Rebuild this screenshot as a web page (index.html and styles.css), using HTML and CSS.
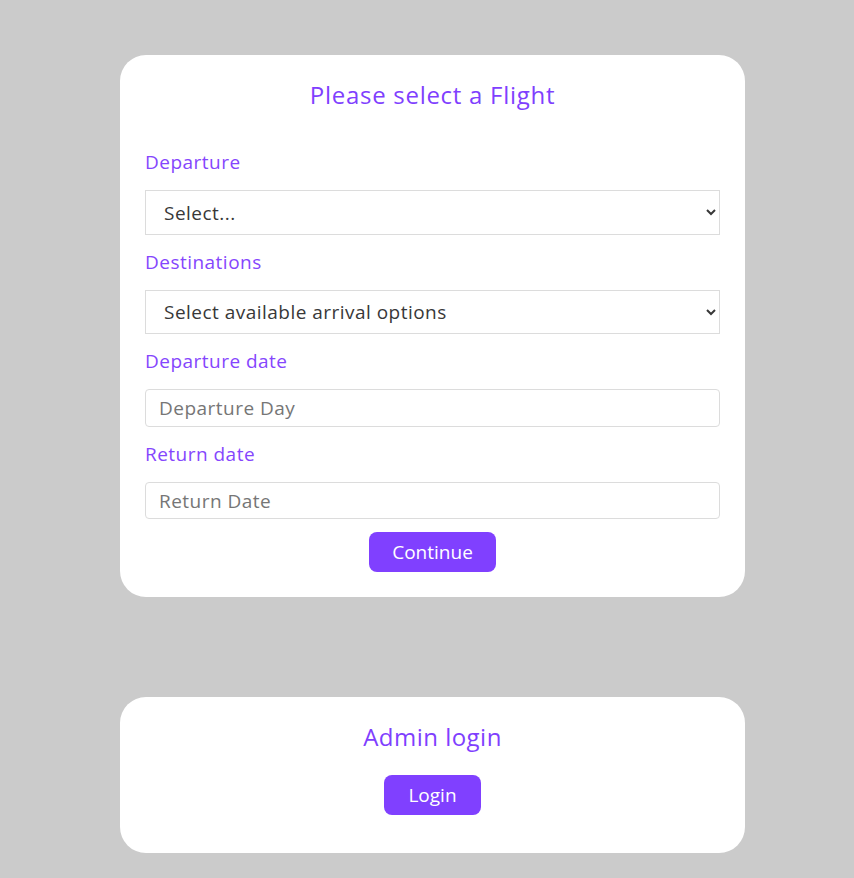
FILE: index.html
```html
<!DOCTYPE html>
<html lang="en">
<head>
<meta charset="utf-8">
<title>Flights</title>
<link rel="stylesheet" href="styles.css">
</head>
<body>
<main class="page">
  <section class="card flight-card">
    <h1 class="card-title">Please select a Flight</h1>
    <form class="flight-form">
      <label class="field-label" for="dep">Departure</label>
      <select id="dep" class="field-select">
        <option>Select...</option>
      </select>
      <label class="field-label" for="dest">Destinations</label>
      <select id="dest" class="field-select">
        <option>Select available arrival options</option>
      </select>
      <label class="field-label" for="ddate">Departure date</label>
      <input id="ddate" class="field-input" type="text" placeholder="Departure Day">
      <label class="field-label" for="rdate">Return date</label>
      <input id="rdate" class="field-input" type="text" placeholder="Return Date">
      <div class="actions">
        <button type="button" class="btn btn-continue">Continue</button>
      </div>
    </form>
  </section>
  <section class="card admin-card">
    <h2 class="card-title">Admin login</h2>
    <div class="actions">
      <button type="button" class="btn btn-login">Login</button>
    </div>
  </section>
</main>
</body>
</html>
```
FILE: styles.css
```css
html, body {
  margin: 0;
  padding: 0;
  background: #cbcbcb;
  font-family: "Open Sans", "Lato", sans-serif;
  letter-spacing: 0.03em;
}
.page {
  display: flex;
  flex-direction: column;
  padding: 55px 0 0 120px;
  gap: 100px;
}
.card {
  width: 625px;
  box-sizing: border-box;
  background: #fff;
  border-radius: 26px;
  padding: 24px 25px 25px;
}
.admin-card {
  padding-bottom: 38px;
}
.card-title {
  margin: 0;
  text-align: center;
  font-weight: 400;
  font-size: 24px;
  line-height: 32px;
  color: #7f3ffe;
  letter-spacing: 0.03em;
}
.admin-card .card-title {
  letter-spacing: 0.02em;
}
.flight-form {
  display: flex;
  flex-direction: column;
  margin-top: 37px;
}
.field-label {
  display: block;
  font-size: 19px;
  line-height: 28px;
  color: #8546fd;
  margin: 13px 0 14px;
  letter-spacing: 0.025em;
}
.field-label:first-child {
  margin-top: 0;
}
.field-select {
  height: 45px;
  box-sizing: border-box;
  border: 1px solid #dcdcdc;
  border-radius: 0;
  background: #fff;
  padding: 0 12px 0 14px;
  font-family: inherit;
  font-size: 19px;
  color: #383838;
  letter-spacing: 0.025em;
}
#dest { height: 44px; }
.field-input {
  height: 38px;
  box-sizing: border-box;
  border: 1px solid #dcdcdc;
  border-radius: 4px;
  padding: 0 13px;
  font-family: inherit;
  font-size: 19px;
  color: #333;
  outline: none;
  letter-spacing: 0.025em;
}
#rdate { height: 37px; }
.field-input::placeholder {
  color: #767676;
}
.actions {
  display: flex;
  justify-content: center;
}
.flight-form .actions {
  margin-top: 13px;
}
.admin-card .actions {
  margin-top: 22px;
}
.btn {
  height: 40px;
  border: none;
  border-radius: 8px;
  background: #8040ff;
  color: #fff;
  font-family: inherit;
  font-size: 19px;
  letter-spacing: 0;
  cursor: pointer;
}
.btn-continue { width: 127px; }
.btn-login { width: 97px; }
```
